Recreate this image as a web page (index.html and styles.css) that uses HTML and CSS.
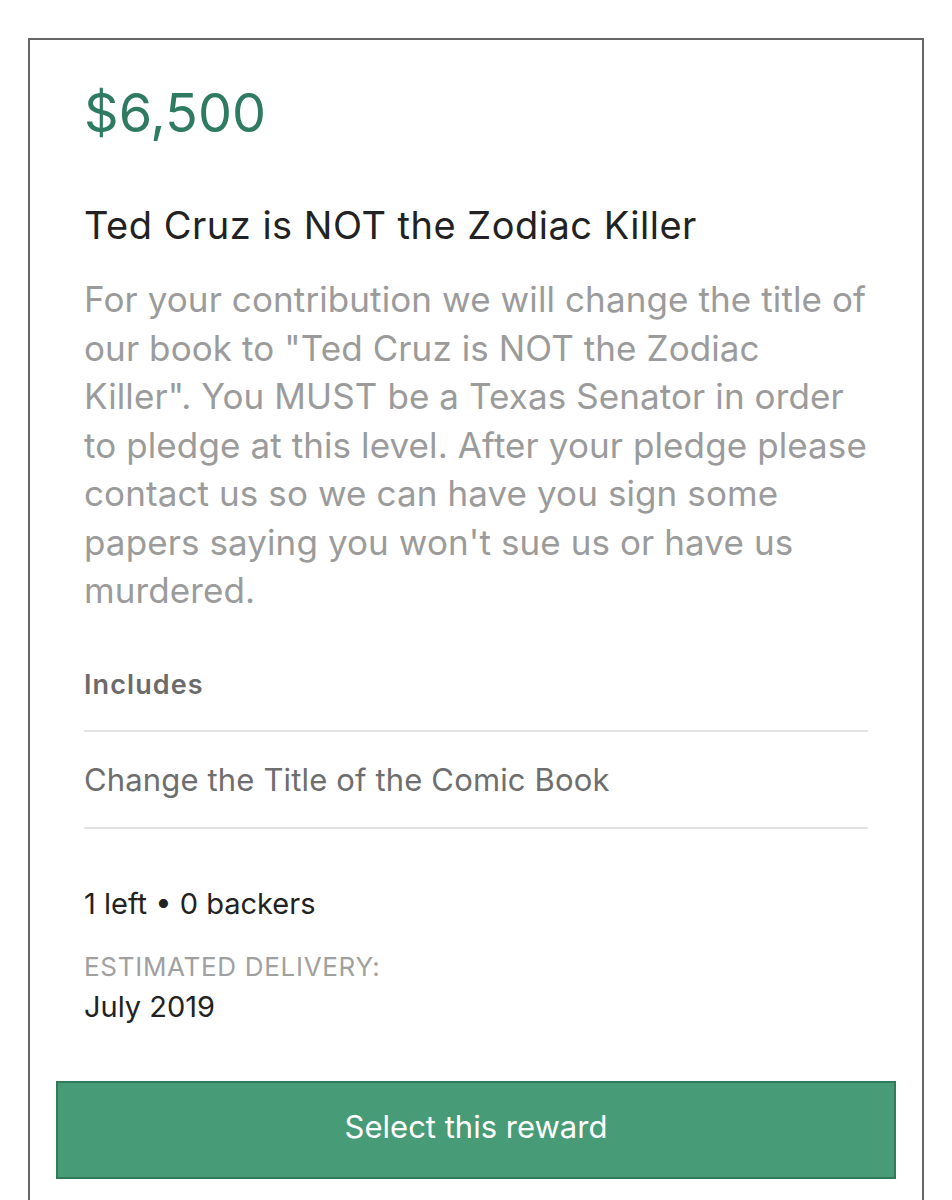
FILE: index.html
```html
<!DOCTYPE html>
<html lang="en">
<head>
<meta charset="utf-8">
<title>Reward</title>
<link rel="stylesheet" href="styles.css">
</head>
<body>
<div class="card">
  <div class="price">$6,500</div>
  <h2 class="title">Ted Cruz is NOT the Zodiac Killer</h2>
  <p class="desc">For your contribution we will change the title of<br>our book to "Ted Cruz is NOT the Zodiac<br>Killer". You MUST be a Texas Senator in order<br>to pledge at this level. After your pledge please<br>contact us so we can have you sign some<br>papers saying you won't sue us or have us<br>murdered.</p>
  <div class="includes-label">Includes</div>
  <ul class="includes">
    <li>Change the Title of the Comic Book</li>
  </ul>
  <div class="stats">1 left • 0 backers</div>
  <div class="est-label">ESTIMATED DELIVERY:</div>
  <div class="est-date">July 2019</div>
  <button class="select">Select this reward</button>
</div>
</body>
</html>
```
FILE: styles.css
```css
html, body {
  margin: 0;
  padding: 0;
  background: #ffffff;
}
body {
  font-family: Inter, "Noto Sans", "Liberation Sans", sans-serif;
  color: #222222;
}
.card {
  margin: 38px 0 0 28px;
  border: 2px solid #666666;
  border-bottom: none;
  padding: 41px 54px 40px 54px;
  box-sizing: border-box;
  width: 896px;
  display: flex;
  flex-direction: column;
}
.price {
  font-size: 54px;
  line-height: 64px;
  color: #2e7b62;
  font-weight: 400;
}
.title {
  margin: 58px 0 0 0;
  font-size: 38px;
  line-height: 44px;
  letter-spacing: 0.5px;
  font-weight: 400;
  color: #222222;
}
.desc {
  margin: 28px 0 0 0;
  font-size: 35px;
  line-height: 48.5px;
  letter-spacing: 0.1px;
  color: #9b9b9b;
  white-space: nowrap;
}
.includes-label {
  margin-top: 54px;
  font-size: 27px;
  line-height: 32px;
  letter-spacing: 1.1px;
  font-weight: 600;
  color: #6b6b6b;
}
.includes {
  list-style: none;
  margin: 29px 0 0 0;
  padding: 0;
  border-top: 2px solid #e3e3e3;
}
.includes li {
  font-size: 31px;
  line-height: 36px;
  letter-spacing: 0.15px;
  color: #6e6e6e;
  padding: 30px 0 29px 0;
  border-bottom: 2px solid #e3e3e3;
}
.stats {
  margin-top: 57px;
  font-size: 29px;
  line-height: 36px;
  color: #222222;
}
.est-label {
  margin-top: 30px;
  font-size: 26px;
  line-height: 30px;
  letter-spacing: 0.7px;
  color: #a0a0a0;
}
.est-date {
  margin-top: 7px;
  font-size: 29px;
  line-height: 36px;
  color: #222222;
}
.select {
  margin: 56px -28px 0 -28px;
  height: 98px;
  background: #479b77;
  border: 2px solid #327a5b;
  color: #ffffff;
  font-family: inherit;
  font-size: 31px;
  font-weight: 400;
  display: flex;
  align-items: center;
  justify-content: center;
  padding: 0 0 6px 0;
}
```
